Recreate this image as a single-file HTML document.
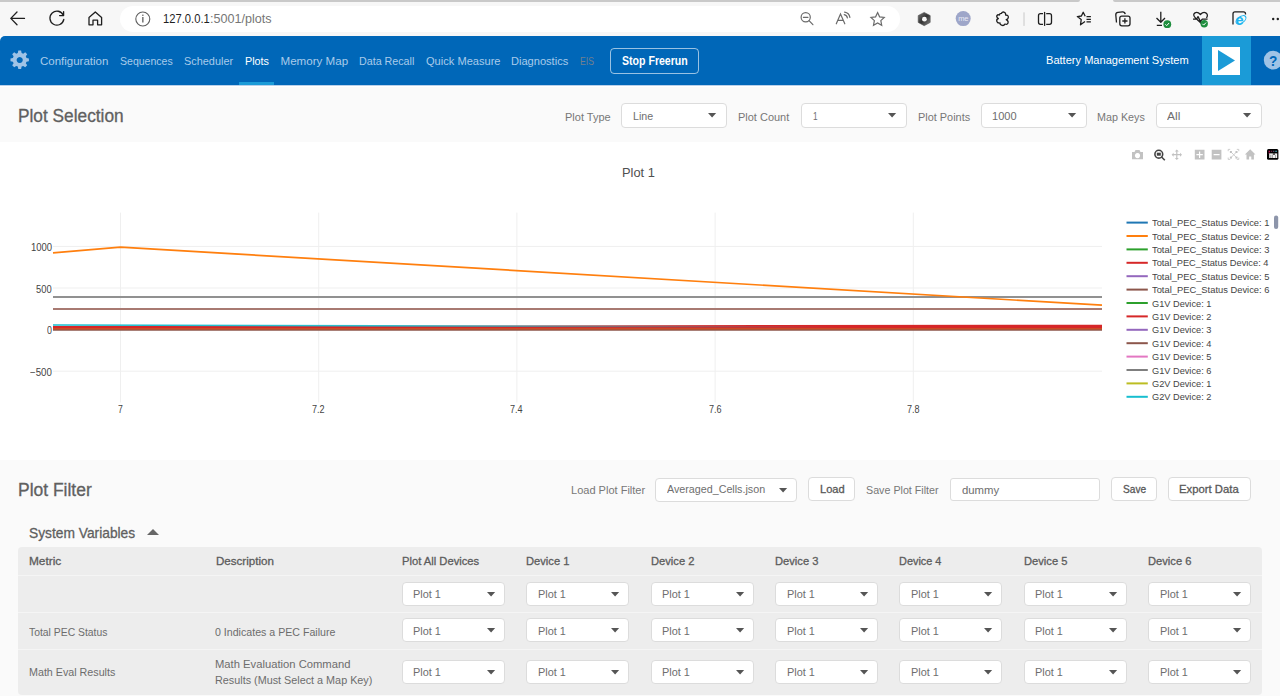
<!DOCTYPE html>
<html><head><meta charset="utf-8"><title>Plots</title>
<style>
html,body{margin:0;padding:0;}
body{width:1280px;height:696px;overflow:hidden;position:relative;background:#fff;font-family:"Liberation Sans",sans-serif;}
.t{position:absolute;white-space:nowrap;transform-origin:0 0;}
svg{overflow:visible}
</style></head><body>
<div style="position:absolute;left:0;top:0;width:1280px;height:36px;background:#f7f7f7"></div>
<div style="position:absolute;left:0;top:0;width:1080px;height:2px;background:#c9c9c9;border-bottom-right-radius:2px"></div>
<div style="position:absolute;left:1113px;top:0;width:167px;height:2px;background:#c9c9c9;border-bottom-left-radius:2px"></div>
<div style="position:absolute;left:120px;top:6px;width:780px;height:26px;background:#fff;border-radius:13px"></div>
<svg style="position:absolute;left:0;top:0" width="1280" height="36" viewBox="0 0 1280 36">
<defs><linearGradient id="cp" x1="0" y1="0" x2="1" y2="1"><stop offset="0" stop-color="#777"/><stop offset="0.5" stop-color="#333"/><stop offset="1" stop-color="#888"/></linearGradient></defs>
<g fill="none" stroke="#1f1f1f" stroke-width="1.3" stroke-linecap="round" stroke-linejoin="round">
 <path d="M24.5 18.4 H10.8 M17 12 L10.8 18.4 L17 24.8"/>
 <path d="M63.3 15.2 A7 7 0 1 0 63.8 19.5"/>
 <path d="M63.6 11.6 V15.6 H59.6"/>
 <path d="M89 24.8 V17.6 L95.3 12 L101.6 17.6 V24.8 H97.6 V20.2 H93 V24.8 Z"/>
</g>
<g fill="none" stroke="#5f5f5f" stroke-width="1.1">
 <circle cx="142.8" cy="19" r="7"/>
</g>
<rect x="142.2" y="17" width="1.3" height="5.5" fill="#5f5f5f"/>
<rect x="142.2" y="14.6" width="1.3" height="1.3" fill="#5f5f5f"/>
<g fill="none" stroke="#6b6b6b" stroke-width="1.2" stroke-linecap="round">
 <circle cx="805.7" cy="17.3" r="4.6"/><path d="M809 20.6 L812.9 24.7 M803.4 17.3 H808"/>
 <path d="M836.3 23.8 L840.5 13.9 L844.8 23.8 M837.9 20.3 H843.1"/>
 <path d="M844.2 14.6 A4 4 0 0 1 847.4 17.8 M844.6 12.1 A6.5 6.5 0 0 1 849.9 17.4"/>
 <path d="M877.60 12.60 L879.60 16.85 L884.26 17.44 L880.83 20.65 L881.71 25.26 L877.60 23.00 L873.49 25.26 L874.37 20.65 L870.94 17.44 L875.60 16.85 Z"/>
</g>
<path d="M924.2 12.4 L930.2 15.6 L930.2 22.4 L924.2 25.7 L918.2 22.4 L918.2 15.6 Z" fill="url(#cp)" stroke="#555" stroke-width="0.6" stroke-linejoin="round"/>
<circle cx="924.4" cy="19.2" r="2.4" fill="#f7f7f7"/>
<circle cx="963.2" cy="18.6" r="7.5" fill="#9ea6c9"/>
<text x="963.2" y="20.9" font-family="Liberation Sans" font-size="7.5" fill="#e9ebf5" text-anchor="middle" letter-spacing="-0.3">me</text>
<g fill="none" stroke="#1f1f1f" stroke-width="1.3" stroke-linejoin="round">
 <path d="M999.5 15 Q999.5 13.2 1001.5 13.4 Q1002.5 11.3 1004.5 12.3 Q1006 13 1005.6 15 Q1008.6 15 1008.3 17.6 Q1008 19.3 1006.2 19.6 Q1008.6 20.6 1008 23 Q1007.2 25 1005 24 Q1003.8 26.2 1001.5 25.2 Q999.8 24.7 1000 23 Q997.4 23.3 996.8 21.2 Q996.3 19 998.4 18.5 Q996.2 17.4 996.9 15.6 Q997.7 14.3 999.5 15 Z"/>
 <path d="M1043 13.7 H1040.5 A2 2 0 0 0 1038.5 15.7 V22.3 A2 2 0 0 0 1040.5 24.3 H1043 M1046.2 13.7 H1049.5 A2 2 0 0 1 1051.5 15.7 V22.3 A2 2 0 0 1 1049.5 24.3 H1046.2"/>
 <path d="M1044.6 11.9 V25.9"/>
 <path d="M1085 21.5 L1080.5 24.8 L1081.2 19.6 L1077.3 16.6 L1081.4 16 L1083.2 12.3 L1085.2 16.2"/>
 <path d="M1086.5 16.7 H1090.9 M1086.5 19.3 H1090.9 M1086.5 21.9 H1090.9"/>
 <path d="M1116.5 22.5 L1115.8 15 Q1115.6 12.6 1118 12.3 L1122.5 11.9 Q1124.8 11.8 1125.2 14.2"/>
 <rect x="1119.8" y="16.1" width="10.2" height="9.7" rx="2"/>
 <path d="M1124.9 18.3 V23.6 M1122.3 21 H1127.5"/>
 <path d="M1160.8 11.8 V22.3 M1156.5 18 L1160.8 22.3 L1165 18 M1156.8 25.3 H1162"/>
 <path d="M1202.5 24.5 L1195.5 18 Q1192.2 14.6 1195 12.9 Q1197.6 11.5 1200.4 14.5 Q1203.2 11.5 1205.8 12.9 Q1208.6 14.6 1206.5 18 M1193 19.2 H1196.5 L1198 16.6 L1200.5 21.5 L1202.3 19.2 H1207.6"/>
 <path d="M1233 24.6 V13.8 A2 2 0 0 1 1235 11.8 H1243.5 A2 2 0 0 1 1245.5 13.8 V14.5"/>
</g>
<path d="M1024 12.4 V25.9" stroke="#c8c8c8" stroke-width="1"/>
<circle cx="1167.3" cy="24.2" r="3.9" fill="#1e8e3e"/><path d="M1165.4 24.3 l1.3 1.3 l2.4 -2.6" stroke="#fff" stroke-width="1" fill="none"/>
<circle cx="1204.2" cy="23.7" r="3.7" fill="#1e8e3e"/><path d="M1202.4 23.8 l1.3 1.3 l2.3 -2.5" stroke="#fff" stroke-width="1" fill="none"/>
<ellipse cx="1241" cy="19.8" rx="5.6" ry="3.2" transform="rotate(-35 1241 19.8)" fill="none" stroke="#1eb4f0" stroke-width="1.1"/>
<text x="1235.6" y="25" font-family="Liberation Sans" font-weight="bold" font-size="14.5" fill="#1eb4f0">e</text>
<g fill="#1f1f1f"><circle cx="1273.2" cy="19" r="1.2"/><circle cx="1277.8" cy="19" r="1.2"/><circle cx="1282.4" cy="19" r="1.2"/></g>
</svg>
<div style="position:absolute;left:0;top:36px;width:1280px;height:49px;background:#0067b8;border-top-left-radius:5px"></div>
<div style="position:absolute;left:0;top:85px;width:1280px;height:1px;background:#b9d0ea"></div>
<div style="position:absolute;left:0;top:86px;width:1280px;height:1px;background:#ffffff"></div>
<div style="position:absolute;left:239px;top:82px;width:35px;height:3px;background:#1b9bd7"></div>
<div style="position:absolute;left:1202px;top:36px;width:49px;height:49px;background:#1b9bd7"></div>
<div style="position:absolute;left:1212px;top:46.6px;width:28.3px;height:28.2px;background:#fff"></div>
<svg style="position:absolute;left:0;top:36px" width="1280" height="49" viewBox="0 36 1280 49">
<polygon points="1218,50 1235,60.5 1218,71" fill="#1b9bd7"/>
<g fill="#9fc3e6">
 <path d="M19.7 50.6 l1.4 0 l0.5 2.4 l1.6 0.7 l2 -1.4 l2 2 l-1.4 2 l0.7 1.6 l2.4 0.5 v2.8 l-2.4 0.5 l-0.7 1.6 l1.4 2 l-2 2 l-2 -1.4 l-1.6 0.7 l-0.5 2.4 h-2.8 l-0.5 -2.4 l-1.6 -0.7 l-2 1.4 l-2 -2 l1.4 -2 l-0.7 -1.6 l-2.4 -0.5 v-2.8 l2.4 -0.5 l0.7 -1.6 l-1.4 -2 l2 -2 l2 1.4 l1.6 -0.7 l0.5 -2.4 Z M19.7 56.9 a3.1 3.1 0 1 0 0.01 0 Z" fill-rule="evenodd"/>
 <circle cx="1273.2" cy="60.05" r="9.4"/>
</g>
</svg>
<div style="position:absolute;left:610px;top:48px;width:87px;height:24px;border:1.5px solid rgba(255,255,255,0.6);border-radius:4px"></div>
<div style="position:absolute;left:0;top:87px;width:1280px;height:55px;background:#fafafa"></div>
<div style="position:absolute;left:621px;top:103px;width:106px;height:25px;box-sizing:border-box;background:#fff;border:1px solid #dcdcdc;border-radius:4px"></div>
<svg style="position:absolute;left:708.3px;top:113.4px" width="8.2" height="4.4" viewBox="0 0 8.2 4.4"><polygon points="0,0 8.2,0 4.1,4.4" fill="#555"/></svg>
<div style="position:absolute;left:801px;top:103px;width:106px;height:25px;box-sizing:border-box;background:#fff;border:1px solid #dcdcdc;border-radius:4px"></div>
<svg style="position:absolute;left:888.3px;top:113.4px" width="8.2" height="4.4" viewBox="0 0 8.2 4.4"><polygon points="0,0 8.2,0 4.1,4.4" fill="#555"/></svg>
<div style="position:absolute;left:981px;top:103px;width:106px;height:25px;box-sizing:border-box;background:#fff;border:1px solid #dcdcdc;border-radius:4px"></div>
<svg style="position:absolute;left:1068.3px;top:113.4px" width="8.2" height="4.4" viewBox="0 0 8.2 4.4"><polygon points="0,0 8.2,0 4.1,4.4" fill="#555"/></svg>
<div style="position:absolute;left:1156px;top:103px;width:106px;height:25px;box-sizing:border-box;background:#fff;border:1px solid #dcdcdc;border-radius:4px"></div>
<svg style="position:absolute;left:1243.3px;top:113.4px" width="8.2" height="4.4" viewBox="0 0 8.2 4.4"><polygon points="0,0 8.2,0 4.1,4.4" fill="#555"/></svg>
<svg style="position:absolute;left:0;top:0" width="1280" height="696" viewBox="0 0 1280 696"><defs><linearGradient id="cyg" gradientUnits="userSpaceOnUse" x1="53" y1="0" x2="1102" y2="0"><stop offset="0" stop-color="#17becf" stop-opacity="1"/><stop offset="0.3" stop-color="#17becf" stop-opacity="0.9"/><stop offset="0.75" stop-color="#17becf" stop-opacity="0"/></linearGradient></defs><line x1="120.5" y1="212.6" x2="120.5" y2="402.5" stroke="#efefef" stroke-width="1"/><line x1="318.7" y1="212.6" x2="318.7" y2="402.5" stroke="#efefef" stroke-width="1"/><line x1="516.9" y1="212.6" x2="516.9" y2="402.5" stroke="#efefef" stroke-width="1"/><line x1="715.1" y1="212.6" x2="715.1" y2="402.5" stroke="#efefef" stroke-width="1"/><line x1="913.3" y1="212.6" x2="913.3" y2="402.5" stroke="#efefef" stroke-width="1"/><line x1="53" y1="246.4" x2="1102" y2="246.4" stroke="#efefef" stroke-width="1"/><line x1="53" y1="288.0" x2="1102" y2="288.0" stroke="#efefef" stroke-width="1"/><line x1="53" y1="329.6" x2="1102" y2="329.6" stroke="#efefef" stroke-width="1"/><line x1="53" y1="371.2" x2="1102" y2="371.2" stroke="#efefef" stroke-width="1"/><path d="M53 297 H1102" stroke="#919191" stroke-width="2" fill="none"/><path d="M53 309 H1102" stroke="#a87a72" stroke-width="2" fill="none"/><path d="M53 329.8 H1102" stroke="#8c564b" stroke-width="2" fill="none"/><path d="M53 328.4 H1102" stroke="#cf4a22" stroke-width="2" fill="none"/><path d="M53 327.0 H1102" stroke="#d62728" stroke-width="2" fill="none"/><path d="M53 326.9 L1102 325.7" stroke="#d62728" stroke-width="2" fill="none"/><path d="M53 325.0 L1102 327.6" stroke="url(#cyg)" stroke-width="1.6" fill="none"/><path d="M53 252.8 L120.5 247.2 L1102 305.2" stroke="#ff7f0e" stroke-width="1.7" fill="none"/><line x1="1126.5" y1="222.6" x2="1147.8" y2="222.6" stroke="#1f77b4" stroke-width="2"/><line x1="1126.5" y1="236.0" x2="1147.8" y2="236.0" stroke="#ff7f0e" stroke-width="2"/><line x1="1126.5" y1="249.4" x2="1147.8" y2="249.4" stroke="#2ca02c" stroke-width="2"/><line x1="1126.5" y1="262.8" x2="1147.8" y2="262.8" stroke="#d62728" stroke-width="2"/><line x1="1126.5" y1="276.2" x2="1147.8" y2="276.2" stroke="#9467bd" stroke-width="2"/><line x1="1126.5" y1="289.6" x2="1147.8" y2="289.6" stroke="#8c564b" stroke-width="2"/><line x1="1126.5" y1="303.0" x2="1147.8" y2="303.0" stroke="#2ca02c" stroke-width="2"/><line x1="1126.5" y1="316.4" x2="1147.8" y2="316.4" stroke="#d62728" stroke-width="2"/><line x1="1126.5" y1="329.8" x2="1147.8" y2="329.8" stroke="#9467bd" stroke-width="2"/><line x1="1126.5" y1="343.2" x2="1147.8" y2="343.2" stroke="#8c564b" stroke-width="2"/><line x1="1126.5" y1="356.6" x2="1147.8" y2="356.6" stroke="#e377c2" stroke-width="2"/><line x1="1126.5" y1="370.0" x2="1147.8" y2="370.0" stroke="#7f7f7f" stroke-width="2"/><line x1="1126.5" y1="383.4" x2="1147.8" y2="383.4" stroke="#bcbd22" stroke-width="2"/><line x1="1126.5" y1="396.8" x2="1147.8" y2="396.8" stroke="#17becf" stroke-width="2"/><rect x="1274" y="215.5" width="4.2" height="13.5" rx="2.1" fill="#8d95aa"/></svg>
<svg style="position:absolute;left:1125px;top:145px" width="155" height="18" viewBox="1125 145 155 18">
<g fill="#c2c2c2">
 <path d="M1132 152 h2.5 l1 -2 h4 l1 2 h2.5 v7.2 h-11 Z M1137.5 153 a2.6 2.6 0 1 0 0.01 0 Z" fill-rule="evenodd"/>
 <path d="M1176.8 149.5 l2 2 h-1.4 v2.6 h2.6 v-1.4 l2 2 l-2 2 v-1.4 h-2.6 v2.6 h1.4 l-2 2 l-2 -2 h1.4 v-2.6 h-2.6 v1.4 l-2 -2 l2 -2 v1.4 h2.6 v-2.6 h-1.4 Z"/>
 <path d="M1194.8 149.7 h9.7 v9.8 h-9.7 Z M1199 151.5 v2.6 h-2.6 v1.2 h2.6 v2.6 h1.2 v-2.6 h2.6 v-1.2 h-2.6 v-2.6 Z" fill-rule="evenodd"/>
 <path d="M1211.7 149.7 h9.7 v9.8 h-9.7 Z M1213.6 154 v1.3 h6 v-1.3 Z" fill-rule="evenodd"/>
 <path d="M1250.2 149.3 l5.3 5.2 h-1.6 v5 h-2.6 v-3 h-2.2 v3 h-2.6 v-5 h-1.6 Z"/>
</g>
<g fill="none" stroke="#c8c8c8" stroke-width="0.9">
 <path d="M1228.2 151.2 v-1.8 h2 M1236.8 149.4 h2 v1.8 M1238.8 157.6 v1.8 h-2 M1230.2 159.4 h-2 v-1.8 M1231.2 152.2 L1236.3 157.4 M1236.3 152.2 L1231.2 157.4"/>
</g>
<g fill="#c2c2c2"><rect x="1229.9" y="151" width="2" height="2"/><rect x="1235.5" y="151" width="2" height="2"/><rect x="1229.9" y="156.6" width="2" height="2"/><rect x="1235.5" y="156.6" width="2" height="2"/></g>
<g fill="none" stroke="#444" stroke-width="1.6">
 <circle cx="1158.8" cy="154.2" r="3.9"/><path d="M1161.6 157 L1164.8 160.2"/>
</g>
<rect x="1156.8" y="152.7" width="4" height="3" fill="#444"/>
<rect x="1267" y="149" width="11.4" height="10.8" rx="1.5" fill="#000"/>
<rect x="1268.6" y="150.8" width="1.4" height="1" fill="#e0115f"/><rect x="1270.8" y="150.8" width="1.4" height="1" fill="#8a2a5a"/><rect x="1273" y="150.8" width="1.4" height="1" fill="#5f5f80"/><rect x="1275.3" y="150.8" width="1.6" height="1" fill="#3fb7c8"/>
<rect x="1268.6" y="152.6" width="1.2" height="1" fill="#e0115f"/>
<rect x="1269.2" y="153.4" width="8" height="4.6" fill="#f2f2f2"/>
<rect x="1272.8" y="153.4" width="2.2" height="1.3" fill="#222"/>
<rect x="1270.6" y="154.8" width="0.6" height="3.2" fill="#555"/><rect x="1272.2" y="154.8" width="0.6" height="3.2" fill="#777"/><rect x="1275.4" y="154.8" width="0.6" height="3.2" fill="#777"/>
</svg>
<div style="position:absolute;left:0;top:460px;width:1280px;height:236px;background:#fafafa"></div>
<div style="position:absolute;left:655.4px;top:477.5px;width:142px;height:24.2px;box-sizing:border-box;background:#fff;border:1px solid #dcdcdc;border-radius:4px"></div>
<svg style="position:absolute;left:779.0px;top:487.5px" width="8.2" height="4.4" viewBox="0 0 8.2 4.4"><polygon points="0,0 8.2,0 4.1,4.4" fill="#555"/></svg>
<div style="position:absolute;left:808px;top:477.3px;width:47px;height:24.2px;box-sizing:border-box;background:#fff;border:1px solid #dcdcdc;border-radius:4px"></div>
<div style="position:absolute;left:950px;top:478px;width:150px;height:23px;box-sizing:border-box;background:#fff;border:1px solid #dcdcdc;border-radius:3px"></div>
<div style="position:absolute;left:1110.6px;top:477.3px;width:46.4px;height:24.2px;box-sizing:border-box;background:#fff;border:1px solid #dcdcdc;border-radius:4px"></div>
<div style="position:absolute;left:1167.8px;top:477.3px;width:83px;height:24.2px;box-sizing:border-box;background:#fff;border:1px solid #dcdcdc;border-radius:4px"></div>
<svg style="position:absolute;left:147px;top:529px" width="12" height="6" viewBox="0 0 12 6"><polygon points="0,6 12,6 6,0" fill="#666"/></svg>
<div style="position:absolute;left:18px;top:547px;width:1244px;height:148px;background:#ededed;border-radius:4px"></div>
<div style="position:absolute;left:18px;top:575px;width:1244px;height:1px;background:#f5f5f5"></div>
<div style="position:absolute;left:18px;top:612px;width:1244px;height:1px;background:#f5f5f5"></div>
<div style="position:absolute;left:18px;top:649px;width:1244px;height:1px;background:#f5f5f5"></div>
<div style="position:absolute;left:401.5px;top:582px;width:103px;height:24px;box-sizing:border-box;background:#fff;border:1px solid #dcdcdc;border-radius:4px"></div>
<svg style="position:absolute;left:486.5px;top:591.9px" width="8.2" height="4.4" viewBox="0 0 8.2 4.4"><polygon points="0,0 8.2,0 4.1,4.4" fill="#555"/></svg>
<div style="position:absolute;left:526px;top:582px;width:103px;height:24px;box-sizing:border-box;background:#fff;border:1px solid #dcdcdc;border-radius:4px"></div>
<svg style="position:absolute;left:611.0px;top:591.9px" width="8.2" height="4.4" viewBox="0 0 8.2 4.4"><polygon points="0,0 8.2,0 4.1,4.4" fill="#555"/></svg>
<div style="position:absolute;left:650.5px;top:582px;width:103px;height:24px;box-sizing:border-box;background:#fff;border:1px solid #dcdcdc;border-radius:4px"></div>
<svg style="position:absolute;left:735.5px;top:591.9px" width="8.2" height="4.4" viewBox="0 0 8.2 4.4"><polygon points="0,0 8.2,0 4.1,4.4" fill="#555"/></svg>
<div style="position:absolute;left:775px;top:582px;width:103px;height:24px;box-sizing:border-box;background:#fff;border:1px solid #dcdcdc;border-radius:4px"></div>
<svg style="position:absolute;left:860.0px;top:591.9px" width="8.2" height="4.4" viewBox="0 0 8.2 4.4"><polygon points="0,0 8.2,0 4.1,4.4" fill="#555"/></svg>
<div style="position:absolute;left:899px;top:582px;width:103px;height:24px;box-sizing:border-box;background:#fff;border:1px solid #dcdcdc;border-radius:4px"></div>
<svg style="position:absolute;left:984.0px;top:591.9px" width="8.2" height="4.4" viewBox="0 0 8.2 4.4"><polygon points="0,0 8.2,0 4.1,4.4" fill="#555"/></svg>
<div style="position:absolute;left:1023.5px;top:582px;width:103px;height:24px;box-sizing:border-box;background:#fff;border:1px solid #dcdcdc;border-radius:4px"></div>
<svg style="position:absolute;left:1108.5px;top:591.9px" width="8.2" height="4.4" viewBox="0 0 8.2 4.4"><polygon points="0,0 8.2,0 4.1,4.4" fill="#555"/></svg>
<div style="position:absolute;left:1148px;top:582px;width:103px;height:24px;box-sizing:border-box;background:#fff;border:1px solid #dcdcdc;border-radius:4px"></div>
<svg style="position:absolute;left:1233.0px;top:591.9px" width="8.2" height="4.4" viewBox="0 0 8.2 4.4"><polygon points="0,0 8.2,0 4.1,4.4" fill="#555"/></svg>
<div style="position:absolute;left:401.5px;top:618px;width:103px;height:24px;box-sizing:border-box;background:#fff;border:1px solid #dcdcdc;border-radius:4px"></div>
<svg style="position:absolute;left:486.5px;top:627.9px" width="8.2" height="4.4" viewBox="0 0 8.2 4.4"><polygon points="0,0 8.2,0 4.1,4.4" fill="#555"/></svg>
<div style="position:absolute;left:526px;top:618px;width:103px;height:24px;box-sizing:border-box;background:#fff;border:1px solid #dcdcdc;border-radius:4px"></div>
<svg style="position:absolute;left:611.0px;top:627.9px" width="8.2" height="4.4" viewBox="0 0 8.2 4.4"><polygon points="0,0 8.2,0 4.1,4.4" fill="#555"/></svg>
<div style="position:absolute;left:650.5px;top:618px;width:103px;height:24px;box-sizing:border-box;background:#fff;border:1px solid #dcdcdc;border-radius:4px"></div>
<svg style="position:absolute;left:735.5px;top:627.9px" width="8.2" height="4.4" viewBox="0 0 8.2 4.4"><polygon points="0,0 8.2,0 4.1,4.4" fill="#555"/></svg>
<div style="position:absolute;left:775px;top:618px;width:103px;height:24px;box-sizing:border-box;background:#fff;border:1px solid #dcdcdc;border-radius:4px"></div>
<svg style="position:absolute;left:860.0px;top:627.9px" width="8.2" height="4.4" viewBox="0 0 8.2 4.4"><polygon points="0,0 8.2,0 4.1,4.4" fill="#555"/></svg>
<div style="position:absolute;left:899px;top:618px;width:103px;height:24px;box-sizing:border-box;background:#fff;border:1px solid #dcdcdc;border-radius:4px"></div>
<svg style="position:absolute;left:984.0px;top:627.9px" width="8.2" height="4.4" viewBox="0 0 8.2 4.4"><polygon points="0,0 8.2,0 4.1,4.4" fill="#555"/></svg>
<div style="position:absolute;left:1023.5px;top:618px;width:103px;height:24px;box-sizing:border-box;background:#fff;border:1px solid #dcdcdc;border-radius:4px"></div>
<svg style="position:absolute;left:1108.5px;top:627.9px" width="8.2" height="4.4" viewBox="0 0 8.2 4.4"><polygon points="0,0 8.2,0 4.1,4.4" fill="#555"/></svg>
<div style="position:absolute;left:1148px;top:618px;width:103px;height:24px;box-sizing:border-box;background:#fff;border:1px solid #dcdcdc;border-radius:4px"></div>
<svg style="position:absolute;left:1233.0px;top:627.9px" width="8.2" height="4.4" viewBox="0 0 8.2 4.4"><polygon points="0,0 8.2,0 4.1,4.4" fill="#555"/></svg>
<div style="position:absolute;left:401.5px;top:660px;width:103px;height:24px;box-sizing:border-box;background:#fff;border:1px solid #dcdcdc;border-radius:4px"></div>
<svg style="position:absolute;left:486.5px;top:669.9px" width="8.2" height="4.4" viewBox="0 0 8.2 4.4"><polygon points="0,0 8.2,0 4.1,4.4" fill="#555"/></svg>
<div style="position:absolute;left:526px;top:660px;width:103px;height:24px;box-sizing:border-box;background:#fff;border:1px solid #dcdcdc;border-radius:4px"></div>
<svg style="position:absolute;left:611.0px;top:669.9px" width="8.2" height="4.4" viewBox="0 0 8.2 4.4"><polygon points="0,0 8.2,0 4.1,4.4" fill="#555"/></svg>
<div style="position:absolute;left:650.5px;top:660px;width:103px;height:24px;box-sizing:border-box;background:#fff;border:1px solid #dcdcdc;border-radius:4px"></div>
<svg style="position:absolute;left:735.5px;top:669.9px" width="8.2" height="4.4" viewBox="0 0 8.2 4.4"><polygon points="0,0 8.2,0 4.1,4.4" fill="#555"/></svg>
<div style="position:absolute;left:775px;top:660px;width:103px;height:24px;box-sizing:border-box;background:#fff;border:1px solid #dcdcdc;border-radius:4px"></div>
<svg style="position:absolute;left:860.0px;top:669.9px" width="8.2" height="4.4" viewBox="0 0 8.2 4.4"><polygon points="0,0 8.2,0 4.1,4.4" fill="#555"/></svg>
<div style="position:absolute;left:899px;top:660px;width:103px;height:24px;box-sizing:border-box;background:#fff;border:1px solid #dcdcdc;border-radius:4px"></div>
<svg style="position:absolute;left:984.0px;top:669.9px" width="8.2" height="4.4" viewBox="0 0 8.2 4.4"><polygon points="0,0 8.2,0 4.1,4.4" fill="#555"/></svg>
<div style="position:absolute;left:1023.5px;top:660px;width:103px;height:24px;box-sizing:border-box;background:#fff;border:1px solid #dcdcdc;border-radius:4px"></div>
<svg style="position:absolute;left:1108.5px;top:669.9px" width="8.2" height="4.4" viewBox="0 0 8.2 4.4"><polygon points="0,0 8.2,0 4.1,4.4" fill="#555"/></svg>
<div style="position:absolute;left:1148px;top:660px;width:103px;height:24px;box-sizing:border-box;background:#fff;border:1px solid #dcdcdc;border-radius:4px"></div>
<svg style="position:absolute;left:1233.0px;top:669.9px" width="8.2" height="4.4" viewBox="0 0 8.2 4.4"><polygon points="0,0 8.2,0 4.1,4.4" fill="#555"/></svg>
<div class="t" style="left:163.47px;top:12.47px;font-size:13.5px;line-height:13.5px;font-weight:400;color:#1f1f1f;transform:scaleX(0.8304);">127.0.0.1</div>
<div class="t" style="left:210.47px;top:12.47px;font-size:13.5px;line-height:13.5px;font-weight:400;color:#767676;transform:scaleX(0.9326);">:5001/plots</div>
<div class="t" style="left:40.30px;top:54.78px;font-size:11.6px;line-height:11.6px;font-weight:400;color:#a9cbea;transform:scaleX(0.9910);">Configuration</div>
<div class="t" style="left:119.90px;top:54.78px;font-size:11.6px;line-height:11.6px;font-weight:400;color:#a9cbea;transform:scaleX(0.9087);">Sequences</div>
<div class="t" style="left:184.30px;top:54.78px;font-size:11.6px;line-height:11.6px;font-weight:400;color:#a9cbea;transform:scaleX(0.9399);">Scheduler</div>
<div class="t" style="left:244.90px;top:54.78px;font-size:11.6px;line-height:11.6px;font-weight:400;color:#ffffff;transform:scaleX(0.9316);">Plots</div>
<div class="t" style="left:280.50px;top:54.78px;font-size:11.6px;line-height:11.6px;font-weight:400;color:#a9cbea;">Memory Map</div>
<div class="t" style="left:359.00px;top:54.78px;font-size:11.6px;line-height:11.6px;font-weight:400;color:#a9cbea;transform:scaleX(0.9225);">Data Recall</div>
<div class="t" style="left:425.60px;top:54.78px;font-size:11.6px;line-height:11.6px;font-weight:400;color:#a9cbea;transform:scaleX(0.9559);">Quick Measure</div>
<div class="t" style="left:511.00px;top:54.78px;font-size:11.6px;line-height:11.6px;font-weight:400;color:#a9cbea;transform:scaleX(0.9546);">Diagnostics</div>
<div class="t" style="left:580.30px;top:54.78px;font-size:11.6px;line-height:11.6px;font-weight:400;color:#73808e;transform:scaleX(0.7439);">EIS</div>
<div class="t" style="left:621.90px;top:55.37px;font-size:12.2px;line-height:12.2px;font-weight:700;color:#ffffff;transform:scaleX(0.8674);">Stop Freerun</div>
<div class="t" style="left:1046.40px;top:54.61px;font-size:11.8px;line-height:11.8px;font-weight:400;color:#ffffff;transform:scaleX(0.9384);">Battery Management System</div>
<div class="t" style="left:1269.00px;top:52.68px;font-size:15.5px;line-height:15.5px;font-weight:700;color:#0067b8;transform:scaleX(0.8778);">?</div>
<div class="t" style="left:17.61px;top:108.29px;font-size:17.5px;line-height:17.5px;font-weight:400;color:#606060;-webkit-text-stroke:0.3px #606060;transform:scaleX(0.9869);">Plot Selection</div>
<div class="t" style="left:564.70px;top:110.88px;font-size:11.6px;line-height:11.6px;font-weight:400;color:#777777;transform:scaleX(0.9481);">Plot Type</div>
<div class="t" style="left:737.70px;top:110.88px;font-size:11.6px;line-height:11.6px;font-weight:400;color:#777777;transform:scaleX(0.9469);">Plot Count</div>
<div class="t" style="left:917.70px;top:110.88px;font-size:11.6px;line-height:11.6px;font-weight:400;color:#777777;transform:scaleX(0.9402);">Plot Points</div>
<div class="t" style="left:1097.20px;top:110.88px;font-size:11.6px;line-height:11.6px;font-weight:400;color:#777777;transform:scaleX(0.9275);">Map Keys</div>
<div class="t" style="left:632.60px;top:109.58px;font-size:11.6px;line-height:11.6px;font-weight:400;color:#6e6e6e;transform:scaleX(0.9175);">Line</div>
<div class="t" style="left:812.70px;top:109.58px;font-size:11.6px;line-height:11.6px;font-weight:400;color:#6e6e6e;transform:scaleX(0.7167);">1</div>
<div class="t" style="left:992.20px;top:109.58px;font-size:11.6px;line-height:11.6px;font-weight:400;color:#6e6e6e;transform:scaleX(0.9509);">1000</div>
<div class="t" style="left:1167.00px;top:109.58px;font-size:11.6px;line-height:11.6px;font-weight:400;color:#6e6e6e;transform:scaleX(1.0318);">All</div>
<div class="t" style="left:1151.90px;top:218.12px;font-size:9.6px;line-height:9.6px;font-weight:400;color:#444;transform:scaleX(0.9744);">Total_PEC_Status Device: 1</div>
<div class="t" style="left:1151.90px;top:231.52px;font-size:9.6px;line-height:9.6px;font-weight:400;color:#444;transform:scaleX(0.9744);">Total_PEC_Status Device: 2</div>
<div class="t" style="left:1151.90px;top:244.92px;font-size:9.6px;line-height:9.6px;font-weight:400;color:#444;transform:scaleX(0.9744);">Total_PEC_Status Device: 3</div>
<div class="t" style="left:1151.90px;top:258.32px;font-size:9.6px;line-height:9.6px;font-weight:400;color:#444;transform:scaleX(0.9663);">Total_PEC_Status Device: 4</div>
<div class="t" style="left:1151.90px;top:271.72px;font-size:9.6px;line-height:9.6px;font-weight:400;color:#444;transform:scaleX(0.9744);">Total_PEC_Status Device: 5</div>
<div class="t" style="left:1151.90px;top:285.12px;font-size:9.6px;line-height:9.6px;font-weight:400;color:#444;transform:scaleX(0.9744);">Total_PEC_Status Device: 6</div>
<div class="t" style="left:1151.90px;top:298.52px;font-size:9.6px;line-height:9.6px;font-weight:400;color:#444;transform:scaleX(0.96);transform-origin:0 0;">G1V Device: 1</div>
<div class="t" style="left:1151.90px;top:311.92px;font-size:9.6px;line-height:9.6px;font-weight:400;color:#444;transform:scaleX(0.96);transform-origin:0 0;">G1V Device: 2</div>
<div class="t" style="left:1151.90px;top:325.32px;font-size:9.6px;line-height:9.6px;font-weight:400;color:#444;transform:scaleX(0.96);transform-origin:0 0;">G1V Device: 3</div>
<div class="t" style="left:1151.90px;top:338.72px;font-size:9.6px;line-height:9.6px;font-weight:400;color:#444;transform:scaleX(0.96);transform-origin:0 0;">G1V Device: 4</div>
<div class="t" style="left:1151.90px;top:352.12px;font-size:9.6px;line-height:9.6px;font-weight:400;color:#444;transform:scaleX(0.96);transform-origin:0 0;">G1V Device: 5</div>
<div class="t" style="left:1151.90px;top:365.52px;font-size:9.6px;line-height:9.6px;font-weight:400;color:#444;transform:scaleX(0.96);transform-origin:0 0;">G1V Device: 6</div>
<div class="t" style="left:1151.90px;top:378.92px;font-size:9.6px;line-height:9.6px;font-weight:400;color:#444;transform:scaleX(0.96);transform-origin:0 0;">G2V Device: 1</div>
<div class="t" style="left:1151.90px;top:392.32px;font-size:9.6px;line-height:9.6px;font-weight:400;color:#444;transform:scaleX(0.96);transform-origin:0 0;">G2V Device: 2</div>
<div class="t" style="left:622.38px;top:167.23px;font-size:12.6px;line-height:12.6px;font-weight:400;color:#505050;transform:scaleX(1.0224);">Plot 1</div>
<div class="t" style="left:30.80px;top:242.73px;font-size:10px;line-height:10px;font-weight:400;color:#444;transform:scaleX(0.9478);">1000</div>
<div class="t" style="left:36.25px;top:284.84px;font-size:10px;line-height:10px;font-weight:400;color:#444;transform:scaleX(0.9373);">500</div>
<div class="t" style="left:47.00px;top:325.94px;font-size:10px;line-height:10px;font-weight:400;color:#444;transform:scaleX(0.8833);">0</div>
<div class="t" style="left:30.00px;top:368.14px;font-size:10px;line-height:10px;font-weight:400;color:#444;transform:scaleX(0.9711);">−500</div>
<div class="t" style="left:117.90px;top:404.84px;font-size:10px;line-height:10px;font-weight:400;color:#444;transform:scaleX(0.8667);">7</div>
<div class="t" style="left:312.20px;top:404.84px;font-size:10px;line-height:10px;font-weight:400;color:#444;transform:scaleX(0.9066);">7.2</div>
<div class="t" style="left:510.40px;top:404.84px;font-size:10px;line-height:10px;font-weight:400;color:#444;transform:scaleX(0.9066);">7.4</div>
<div class="t" style="left:708.60px;top:404.84px;font-size:10px;line-height:10px;font-weight:400;color:#444;transform:scaleX(0.9066);">7.6</div>
<div class="t" style="left:906.80px;top:404.84px;font-size:10px;line-height:10px;font-weight:400;color:#444;transform:scaleX(0.9066);">7.8</div>
<div class="t" style="left:17.60px;top:482.49px;font-size:17.5px;line-height:17.5px;font-weight:400;color:#606060;-webkit-text-stroke:0.3px #606060;transform:scaleX(0.9976);">Plot Filter</div>
<div class="t" style="left:570.50px;top:483.88px;font-size:11.6px;line-height:11.6px;font-weight:400;color:#777777;transform:scaleX(0.9512);">Load Plot Filter</div>
<div class="t" style="left:667.30px;top:483.38px;font-size:11.6px;line-height:11.6px;font-weight:400;color:#6e6e6e;transform:scaleX(0.9245);">Averaged_Cells.json</div>
<div class="t" style="left:819.70px;top:483.97px;font-size:11.5px;line-height:11.5px;font-weight:400;color:#585858;-webkit-text-stroke:0.3px #585858;transform:scaleX(0.9648);">Load</div>
<div class="t" style="left:866.25px;top:483.88px;font-size:11.6px;line-height:11.6px;font-weight:400;color:#777777;transform:scaleX(0.9238);">Save Plot Filter</div>
<div class="t" style="left:961.60px;top:483.88px;font-size:11.6px;line-height:11.6px;font-weight:400;color:#6e6e6e;transform:scaleX(0.9788);">dummy</div>
<div class="t" style="left:1122.50px;top:483.97px;font-size:11.5px;line-height:11.5px;font-weight:400;color:#585858;-webkit-text-stroke:0.3px #585858;transform:scaleX(0.8832);">Save</div>
<div class="t" style="left:1179.40px;top:483.97px;font-size:11.5px;line-height:11.5px;font-weight:400;color:#585858;-webkit-text-stroke:0.3px #585858;transform:scaleX(0.9832);">Export Data</div>
<div class="t" style="left:28.80px;top:525.60px;font-size:14.3px;line-height:14.3px;font-weight:400;color:#5f5f5f;-webkit-text-stroke:0.3px #5f5f5f;transform:scaleX(0.9634);">System Variables</div>
<div class="t" style="left:28.50px;top:556.27px;font-size:11.5px;line-height:11.5px;font-weight:400;color:#5c5c5c;-webkit-text-stroke:0.3px #5c5c5c;transform:scaleX(1.0299);">Metric</div>
<div class="t" style="left:215.50px;top:556.27px;font-size:11.5px;line-height:11.5px;font-weight:400;color:#5c5c5c;-webkit-text-stroke:0.3px #5c5c5c;transform:scaleX(1.0065);">Description</div>
<div class="t" style="left:402.00px;top:556.27px;font-size:11.5px;line-height:11.5px;font-weight:400;color:#5c5c5c;-webkit-text-stroke:0.3px #5c5c5c;transform:scaleX(0.9733);">Plot All Devices</div>
<div class="t" style="left:526.00px;top:556.27px;font-size:11.5px;line-height:11.5px;font-weight:400;color:#5c5c5c;-webkit-text-stroke:0.3px #5c5c5c;transform:scaleX(0.9696);">Device 1</div>
<div class="t" style="left:650.50px;top:556.27px;font-size:11.5px;line-height:11.5px;font-weight:400;color:#5c5c5c;-webkit-text-stroke:0.3px #5c5c5c;transform:scaleX(0.9696);">Device 2</div>
<div class="t" style="left:775.00px;top:556.27px;font-size:11.5px;line-height:11.5px;font-weight:400;color:#5c5c5c;-webkit-text-stroke:0.3px #5c5c5c;transform:scaleX(0.9696);">Device 3</div>
<div class="t" style="left:899.00px;top:556.27px;font-size:11.5px;line-height:11.5px;font-weight:400;color:#5c5c5c;-webkit-text-stroke:0.3px #5c5c5c;transform:scaleX(0.9483);">Device 4</div>
<div class="t" style="left:1023.50px;top:556.27px;font-size:11.5px;line-height:11.5px;font-weight:400;color:#5c5c5c;-webkit-text-stroke:0.3px #5c5c5c;transform:scaleX(0.9696);">Device 5</div>
<div class="t" style="left:1148.00px;top:556.27px;font-size:11.5px;line-height:11.5px;font-weight:400;color:#5c5c5c;-webkit-text-stroke:0.3px #5c5c5c;transform:scaleX(0.9696);">Device 6</div>
<div class="t" style="left:28.50px;top:625.88px;font-size:11.6px;line-height:11.6px;font-weight:400;color:#6c6c6c;transform:scaleX(0.8948);">Total PEC Status</div>
<div class="t" style="left:28.50px;top:665.88px;font-size:11.6px;line-height:11.6px;font-weight:400;color:#6c6c6c;transform:scaleX(0.9238);">Math Eval Results</div>
<div class="t" style="left:215.00px;top:625.68px;font-size:11.6px;line-height:11.6px;font-weight:400;color:#6c6c6c;transform:scaleX(0.9159);">0 Indicates a PEC Failure</div>
<div class="t" style="left:215.00px;top:657.88px;font-size:11.6px;line-height:11.6px;font-weight:400;color:#6c6c6c;transform:scaleX(0.9685);">Math Evaluation Command</div>
<div class="t" style="left:215.00px;top:674.38px;font-size:11.6px;line-height:11.6px;font-weight:400;color:#6c6c6c;transform:scaleX(0.9322);">Results (Must Select a Map Key)</div>
<div class="t" style="left:413.00px;top:588.48px;font-size:11.6px;line-height:11.6px;font-weight:400;color:#6e6e6e;transform:scaleX(0.9418);">Plot 1</div>
<div class="t" style="left:537.50px;top:588.48px;font-size:11.6px;line-height:11.6px;font-weight:400;color:#6e6e6e;transform:scaleX(0.9418);">Plot 1</div>
<div class="t" style="left:662.00px;top:588.48px;font-size:11.6px;line-height:11.6px;font-weight:400;color:#6e6e6e;transform:scaleX(0.9418);">Plot 1</div>
<div class="t" style="left:786.50px;top:588.48px;font-size:11.6px;line-height:11.6px;font-weight:400;color:#6e6e6e;transform:scaleX(0.9418);">Plot 1</div>
<div class="t" style="left:910.50px;top:588.48px;font-size:11.6px;line-height:11.6px;font-weight:400;color:#6e6e6e;transform:scaleX(0.9418);">Plot 1</div>
<div class="t" style="left:1035.00px;top:588.48px;font-size:11.6px;line-height:11.6px;font-weight:400;color:#6e6e6e;transform:scaleX(0.9418);">Plot 1</div>
<div class="t" style="left:1159.50px;top:588.48px;font-size:11.6px;line-height:11.6px;font-weight:400;color:#6e6e6e;transform:scaleX(0.9418);">Plot 1</div>
<div class="t" style="left:413.00px;top:624.98px;font-size:11.6px;line-height:11.6px;font-weight:400;color:#6e6e6e;transform:scaleX(0.9418);">Plot 1</div>
<div class="t" style="left:537.50px;top:624.98px;font-size:11.6px;line-height:11.6px;font-weight:400;color:#6e6e6e;transform:scaleX(0.9418);">Plot 1</div>
<div class="t" style="left:662.00px;top:624.98px;font-size:11.6px;line-height:11.6px;font-weight:400;color:#6e6e6e;transform:scaleX(0.9418);">Plot 1</div>
<div class="t" style="left:786.50px;top:624.98px;font-size:11.6px;line-height:11.6px;font-weight:400;color:#6e6e6e;transform:scaleX(0.9418);">Plot 1</div>
<div class="t" style="left:910.50px;top:624.98px;font-size:11.6px;line-height:11.6px;font-weight:400;color:#6e6e6e;transform:scaleX(0.9418);">Plot 1</div>
<div class="t" style="left:1035.00px;top:624.98px;font-size:11.6px;line-height:11.6px;font-weight:400;color:#6e6e6e;transform:scaleX(0.9418);">Plot 1</div>
<div class="t" style="left:1159.50px;top:624.98px;font-size:11.6px;line-height:11.6px;font-weight:400;color:#6e6e6e;transform:scaleX(0.9418);">Plot 1</div>
<div class="t" style="left:413.00px;top:666.48px;font-size:11.6px;line-height:11.6px;font-weight:400;color:#6e6e6e;transform:scaleX(0.9418);">Plot 1</div>
<div class="t" style="left:537.50px;top:666.48px;font-size:11.6px;line-height:11.6px;font-weight:400;color:#6e6e6e;transform:scaleX(0.9418);">Plot 1</div>
<div class="t" style="left:662.00px;top:666.48px;font-size:11.6px;line-height:11.6px;font-weight:400;color:#6e6e6e;transform:scaleX(0.9418);">Plot 1</div>
<div class="t" style="left:786.50px;top:666.48px;font-size:11.6px;line-height:11.6px;font-weight:400;color:#6e6e6e;transform:scaleX(0.9418);">Plot 1</div>
<div class="t" style="left:910.50px;top:666.48px;font-size:11.6px;line-height:11.6px;font-weight:400;color:#6e6e6e;transform:scaleX(0.9418);">Plot 1</div>
<div class="t" style="left:1035.00px;top:666.48px;font-size:11.6px;line-height:11.6px;font-weight:400;color:#6e6e6e;transform:scaleX(0.9418);">Plot 1</div>
<div class="t" style="left:1159.50px;top:666.48px;font-size:11.6px;line-height:11.6px;font-weight:400;color:#6e6e6e;transform:scaleX(0.9418);">Plot 1</div>
</body></html>
